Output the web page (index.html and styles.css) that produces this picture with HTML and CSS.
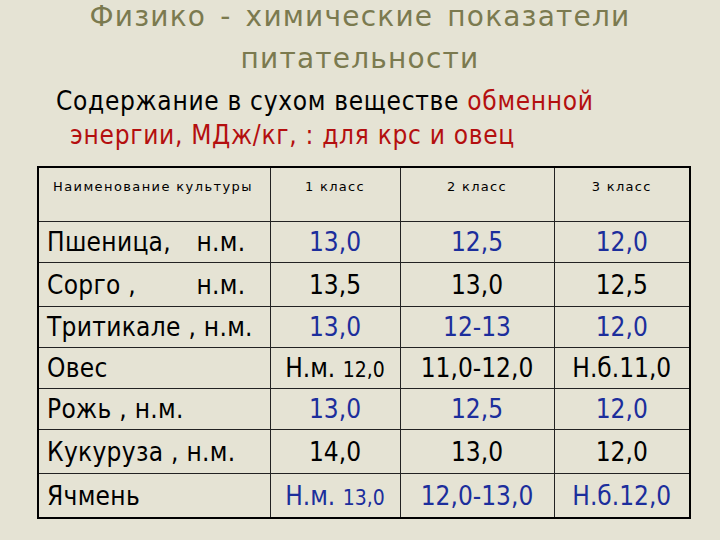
FILE: index.html
```html
<!DOCTYPE html>
<html lang="ru">
<head>
<meta charset="utf-8">
<link rel="stylesheet" href="styles.css">
</head>
<body>
<div class="slide">
  <h1 class="title"><span class="t1">Физико - химические показатели</span><span class="t2">питательности</span></h1>
  <p class="lead"><span class="l1">Содержание в сухом веществе <span class="red">обменной</span></span><span class="l2 red">энергии, МДж/кг, : для крс и овец</span></p>
  <table class="grid">
    <colgroup>
      <col class="c1"><col class="c2"><col class="c3"><col class="c4">
    </colgroup>
    <tr class="head">
      <td class="name">Наименование культуры</td><td>1 класс</td><td>2 класс</td><td>3 класс</td>
    </tr>
    <tr class="r41 blue">
      <td class="name"><span class="split"><span>Пшеница,</span><span>н.м.</span></span></td><td>13,0</td><td>12,5</td><td>12,0</td>
    </tr>
    <tr class="r44">
      <td class="name"><span class="split"><span>Сорго ,</span><span>н.м.</span></span></td><td>13,5</td><td>13,0</td><td>12,5</td>
    </tr>
    <tr class="r41 blue">
      <td class="name">Тритикале , н.м.</td><td>13,0</td><td>12-13</td><td>12,0</td>
    </tr>
    <tr class="r41">
      <td class="name">Овес</td><td>Н.м. <span class="sm">12,0</span></td><td>11,0-12,0</td><td>Н.б.11,0</td>
    </tr>
    <tr class="r41 blue">
      <td class="name">Рожь , н.м.</td><td>13,0</td><td>12,5</td><td>12,0</td>
    </tr>
    <tr class="r44">
      <td class="name">Кукуруза , н.м.</td><td>14,0</td><td>13,0</td><td>12,0</td>
    </tr>
    <tr class="r44 blue">
      <td class="name">Ячмень</td><td>Н.м. <span class="sm">13,0</span></td><td>12,0-13,0</td><td>Н.б.12,0</td>
    </tr>
  </table>
</div>
</body>
</html>
```
FILE: styles.css
```css
html, body {
  margin: 0;
  padding: 0;
}
body {
  background: #e5e3d4;
  font-family: "DejaVu Sans Condensed", "DejaVu Sans", sans-serif;
  font-stretch: condensed;
  width: 720px;
  height: 540px;
  overflow: hidden;
}
.title {
  margin: 2px 0 0 0;
  text-align: center;
  color: #7b7a4f;
  font-family: "DejaVu Sans", sans-serif;
  font-stretch: normal;
  font-weight: normal;
  font-size: 28px;
  letter-spacing: 1.2px;
  word-spacing: 4px;
  line-height: 30px;
}
.t1, .t2 {
  display: block;
}
.t2 {
  margin-top: 12px;
}
.lead {
  margin: 10px 0 0 0;
  font-size: 26px;
  letter-spacing: 0.7px;
  line-height: 34px;
  color: #000;
}
.l1, .l2 {
  display: block;
  white-space: nowrap;
}
.l1 {
  padding-left: 56px;
}
.l2 {
  padding-left: 70px;
}
.red {
  color: #b40f0f;
}
.grid {
  margin: 14px 0 0 37px;
  width: 652px;
  border-collapse: collapse;
  border: 2px solid #000;
  table-layout: fixed;
}
.c1 { width: 232px; }
.c2 { width: 130px; }
.c3 { width: 154px; }
.c4 { width: 136px; }
.grid td {
  border: 1px solid #222;
  padding: 0;
  text-align: center;
  font-size: 26px;
  line-height: 1;
  color: #000;
  white-space: nowrap;
}
.grid td.name {
  text-align: left;
  padding-left: 8px;
  letter-spacing: 0.3px;
}
.head td {
  height: 42px;
  vertical-align: top;
  font-family: "DejaVu Sans", sans-serif;
  font-stretch: normal;
  font-size: 13px;
  line-height: 15px;
  letter-spacing: 1.3px;
  padding-top: 11px;
}
.grid .head td.name {
  padding-left: 14px;
  letter-spacing: 1.4px;
}
.r41 td { height: 40px; }
.r44 td { height: 43px; }
.blue td { color: #1c2e9c; }
.blue td.name { color: #000; }
.split {
  display: flex;
  justify-content: space-between;
  padding-right: 24px;
}
.sm {
  font-size: 21px;
}
```
